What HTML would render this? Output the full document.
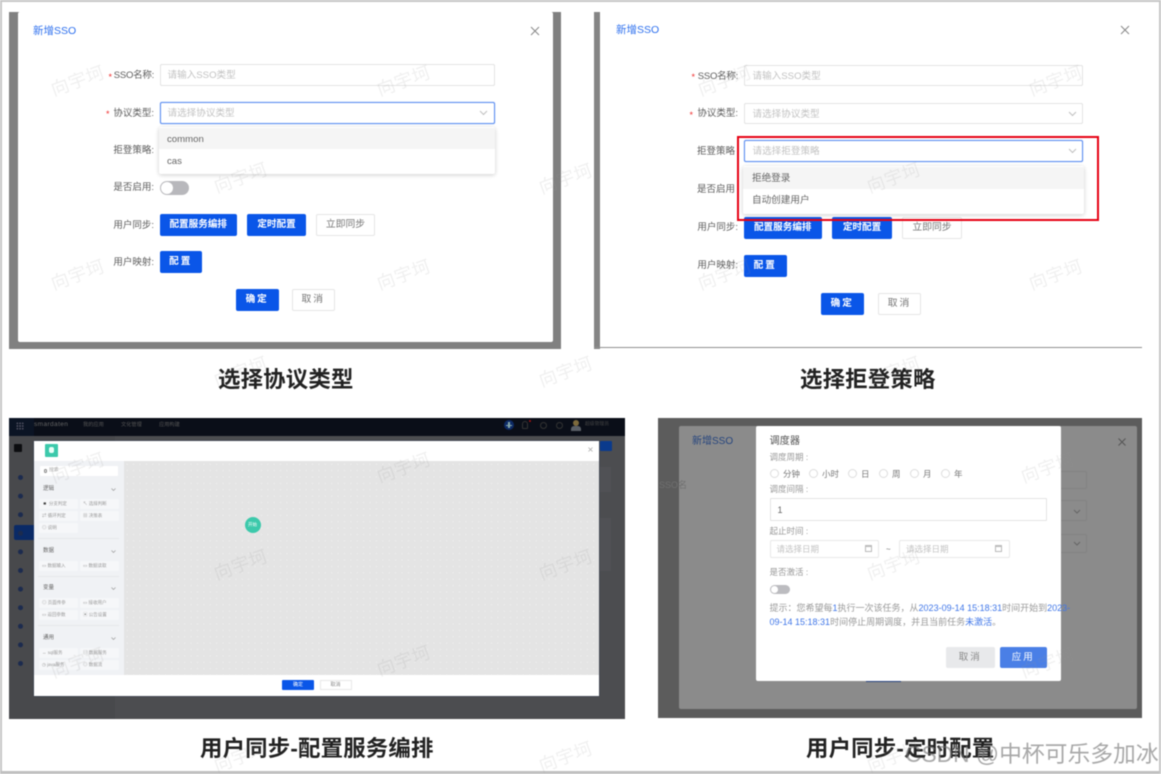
<!DOCTYPE html>
<html lang="zh-CN">
<head>
<meta charset="utf-8">
<title>SSO</title>
<style>
html,body{margin:0;padding:0;background:#fff}
#p{position:relative;width:1161px;height:774px;overflow:hidden;background:#fff;font-family:"Liberation Sans","Noto Sans CJK SC",sans-serif;filter:blur(.55px)}
#p div,#p span.a{position:absolute;box-sizing:border-box;white-space:nowrap}
.lb{font-size:9.5px;color:#5c5c5c;text-align:right;line-height:14px;height:14px;margin-top:1px}
.in{border:1px solid #e3e3e3;border-radius:2px;background:#fff;font-size:9.6px;color:#c2c2c2;padding-left:7px;line-height:21.5px}
.pr{background:#0a56e8;color:#fff;border-radius:2px;font-size:9.6px;text-align:center;line-height:21.5px;font-weight:bold}
.df{background:#fff;color:#777;border:1px solid #e5e5e5;border-radius:2px;font-size:9.8px;text-align:center;line-height:20px}
.cap{font-size:22.4px;font-weight:bold;color:#222;line-height:28px;height:28px;letter-spacing:.2px;margin-top:2px}
.wm{font-size:18px;color:rgba(150,150,150,.14);transform:rotate(-20deg);line-height:22px;letter-spacing:.5px;z-index:20}
.st{color:#f03030;font-size:9px;line-height:14px;height:14px}
.dd{background:#fff;box-shadow:0 1px 4px rgba(0,0,0,.2);border-radius:2px}
.it{font-size:9.6px;color:#666;padding-left:8px;line-height:23px}
.sb{background:#f6f7f9;font-size:4.5px;color:#999;line-height:10px;padding-left:3px;border-radius:1px}
.sh{font-size:5.5px;color:#666;line-height:8px}
.dv{background:#e6e7ea;height:1px}
.b{font-size:8.5px;color:#999;line-height:12px}
.t{font-size:8.5px;color:#888;line-height:12px}
.r{width:9px;height:9px;border:1px solid #ddd;border-radius:50%;background:#fff}
.bl{color:#3f76e8}
svg{position:absolute;overflow:visible}
</style>
</head>
<body>
<div id="p">
<!-- frame -->
<div style="left:0;top:0;width:1161px;height:2px;background:#c6c6c6"></div>
<div style="left:0;top:0;width:2px;height:774px;background:#c6c6c6"></div>
<div style="left:0;top:771px;width:1161px;height:3px;background:#c0c0c0"></div>
<div style="left:1159px;top:0;width:2px;height:774px;background:#c6c6c6"></div>

<!-- panel 1 -->
<div style="left:9px;top:11.5px;width:552px;height:337px;background:#808080"></div>
<div style="left:17.5px;top:12px;width:535.5px;height:330px;background:#fff;border-radius:2px"></div>
<div style="left:33px;top:23.5px;font-size:10.5px;color:#2c6fee;line-height:14px">新增SSO</div>
<svg style="left:530px;top:25.5px" width="10" height="10" viewBox="0 0 10 10"><path d="M1 1L9 9M9 1L1 9" stroke="#888" stroke-width="1" fill="none"/></svg>

<div class="st" style="left:108.5px;top:70px">*</div>
<div class="lb" style="left:100px;top:68px;width:54px;letter-spacing:-.25px">SSO名称:</div>
<div class="in" style="left:159.5px;top:64px;width:335px;height:22px">请输入SSO类型</div>
<div class="st" style="left:106px;top:107px">*</div>
<div class="lb" style="left:100px;top:105.5px;width:54px">协议类型:</div>
<div class="in" style="left:159.5px;top:101.5px;width:335px;height:22px;border-color:#5a8df0;box-shadow:0 0 1px #8fb2f5">请选择协议类型</div>
<svg style="left:479px;top:109.5px" width="9" height="6" viewBox="0 0 9 6"><path d="M1 1L4.5 4.5L8 1" stroke="#c0c0c0" fill="none"/></svg>
<div class="lb" style="left:100px;top:143px;width:54px">拒登策略:</div>
<div class="dd" style="left:159px;top:127px;width:336px;height:47px"></div>
<div class="it" style="left:159px;top:128px;width:336px;height:21px;background:#f5f5f5">common</div>
<div class="it" style="left:159px;top:150px;width:336px;height:21px">cas</div>
<div class="lb" style="left:100px;top:180px;width:54px">是否启用:</div>
<div style="left:159.5px;top:181px;width:29.5px;height:14px;border-radius:7px;background:#b8b8bc"></div>
<div style="left:161px;top:182px;width:12px;height:12px;border-radius:50%;background:#fff"></div>
<div class="lb" style="left:100px;top:217.5px;width:54px">用户同步:</div>
<div class="pr" style="left:159.5px;top:214px;width:77.5px;height:21.5px">配置服务编排</div>
<div class="pr" style="left:247px;top:214px;width:59px;height:21.5px">定时配置</div>
<div class="df" style="left:316px;top:214px;width:59px;height:21.5px">立即同步</div>
<div class="lb" style="left:100px;top:255px;width:54px">用户映射:</div>
<div class="pr" style="left:159.5px;top:251px;width:42.5px;height:22px;letter-spacing:2px">配置</div>
<div class="pr" style="left:235.7px;top:288.5px;width:43px;height:22px;letter-spacing:2px">确定</div>
<div class="df" style="left:292px;top:288.5px;width:42.5px;height:22px;letter-spacing:2px">取消</div>

<!-- panel 2 -->
<div style="left:593.5px;top:11.5px;width:6.5px;height:337px;background:#858585"></div>
<div style="left:593.5px;top:346.5px;width:548.5px;height:1.5px;background:#909090"></div>
<div style="left:616px;top:23px;font-size:10.5px;color:#2c6fee;line-height:14px">新增SSO</div>
<svg style="left:1120px;top:25px" width="10" height="10" viewBox="0 0 10 10"><path d="M1 1L9 9M9 1L1 9" stroke="#888" stroke-width="1" fill="none"/></svg>

<div class="st" style="left:691.5px;top:70px">*</div>
<div class="lb" style="left:684px;top:68.5px;width:54px;letter-spacing:-.25px">SSO名称:</div>
<div class="in" style="left:743.5px;top:64.5px;width:339.5px;height:21.5px;padding-left:8px">请输入SSO类型</div>
<div class="st" style="left:689.5px;top:108px">*</div>
<div class="lb" style="left:684px;top:106px;width:54px">协议类型:</div>
<div class="in" style="left:743.5px;top:102.5px;width:339.5px;height:21.5px;padding-left:8px">请选择协议类型</div>
<svg style="left:1068px;top:110.5px" width="9" height="6" viewBox="0 0 9 6"><path d="M1 1L4.5 4.5L8 1" stroke="#c0c0c0" fill="none"/></svg>
<div class="lb" style="left:684px;top:144px;width:51px">拒登策略</div>
<div class="in" style="left:743.5px;top:140px;width:339.5px;height:22px;border-color:#5a8df0;box-shadow:0 0 1px #8fb2f5;padding-left:8px">请选择拒登策略</div>
<svg style="left:1068px;top:148px" width="9" height="6" viewBox="0 0 9 6"><path d="M1 1L4.5 4.5L8 1" stroke="#c0c0c0" fill="none"/></svg>
<div class="lb" style="left:684px;top:182px;width:51px">是否启用</div>
<div class="lb" style="left:684px;top:220px;width:54px">用户同步:</div>
<div class="pr" style="left:743.5px;top:216.5px;width:78.5px;height:22px">配置服务编排</div>
<div class="pr" style="left:832px;top:216.5px;width:60px;height:22px">定时配置</div>
<div class="df" style="left:902px;top:216.5px;width:60px;height:22px">立即同步</div>
<div class="dd" style="left:743px;top:166px;width:340.5px;height:48px"></div>
<div class="it" style="left:743px;top:167px;width:340.5px;height:22px;background:#f5f5f5;padding-left:9px;line-height:23px">拒绝登录</div>
<div class="it" style="left:743px;top:189px;width:340.5px;height:22px;padding-left:9px">自动创建用户</div>
<div style="left:737px;top:136px;width:361.5px;height:85px;border:2px solid #e60012"></div>
<div class="lb" style="left:684px;top:258px;width:54px">用户映射:</div>
<div class="pr" style="left:743.5px;top:254.5px;width:43.5px;height:22px;letter-spacing:2px">配置</div>
<div class="pr" style="left:820.5px;top:292.5px;width:43.5px;height:22px;letter-spacing:2px">确定</div>
<div class="df" style="left:878px;top:292.5px;width:43px;height:22px;letter-spacing:2px">取消</div>

<!-- captions -->
<div class="cap" style="left:218px;top:364px">选择协议类型</div>
<div class="cap" style="left:800px;top:364px">选择拒登策略</div>
<div class="cap" style="left:200px;top:733px">用户同步-配置服务编排</div>
<div class="cap" style="left:806px;top:733px">用户同步-定时配置</div>

<!-- panel 3 -->
<div style="left:9px;top:417.5px;width:615.5px;height:301px;background:#4c4d50"></div>
<div style="left:9px;top:417.5px;width:106px;height:301px;background:#48494c"></div>
<div style="left:9px;top:417.5px;width:615.5px;height:18px;background:#0a0e18"></div>
<div style="left:9px;top:417.5px;width:25px;height:18px;background:#0b1424"></div>
<div style="left:15.5px;top:421.5px;width:8px;height:8px;background-image:radial-gradient(circle,#556 .7px,transparent .9px);background-size:2.7px 2.7px"></div>
<div style="left:34px;top:420px;font-size:6.5px;color:#666;line-height:10px;letter-spacing:.4px">smardaten</div>
<div style="left:83px;top:420px;font-size:5.2px;color:#555;line-height:10px">我的应用</div>
<div style="left:121px;top:420px;font-size:5.2px;color:#555;line-height:10px">文化管理</div>
<div style="left:159px;top:420px;font-size:5.2px;color:#555;line-height:10px">应用构建</div>
<div style="left:504px;top:420px;width:10px;height:10px;border-radius:50%;background:#0d2a66"></div>
<div style="left:506px;top:424.5px;width:6px;height:1.5px;background:#8aa"></div>
<div style="left:508.2px;top:422px;width:1.5px;height:6px;background:#8aa"></div>
<div style="left:522px;top:421px;width:6px;height:8px;border:1px solid #333;border-radius:3px 3px 1px 1px"></div>
<div style="left:529px;top:419.5px;width:2px;height:2px;border-radius:50%;background:#a11"></div>
<div style="left:540px;top:421.5px;width:7px;height:7px;border:1px solid #333;border-radius:50%"></div>
<div style="left:555.5px;top:421.5px;width:7px;height:7px;border:1px solid #333;border-radius:50%"></div>
<div style="left:573px;top:419.5px;width:6px;height:6px;border-radius:50%;background:#7d6a3c"></div>
<div style="left:571px;top:425.5px;width:10px;height:5px;border-radius:3px 3px 0 0;background:#5a5f66"></div>
<div style="left:585px;top:421px;font-size:4.8px;color:#444;line-height:8px">超级管理员</div>
<div style="left:14px;top:444px;width:8px;height:8px;background:#0c0d10;border-radius:1px"></div>
<div style="left:14px;top:525px;width:22px;height:15px;background:#0a2a66;border-radius:2px"></div>
<div style="left:18px;top:474.5px;width:5px;height:5px;border-radius:50%;background:#1c2b4e;box-shadow:0 18.6px 0 #1c2b4e,0 37.2px 0 #1c2b4e,0 55.8px 0 #1c2b4e,0 74.4px 0 #1c2b4e,0 93px 0 #1c2b4e,0 111.6px 0 #1c2b4e,0 130.2px 0 #1c2b4e,0 148.8px 0 #1c2b4e,0 167.4px 0 #1c2b4e,0 186px 0 #1c2b4e"></div>
<div style="left:600px;top:441px;width:11.5px;height:9.5px;background:#0a3a8c;border-radius:1px"></div>
<div style="left:600px;top:467px;width:11px;height:25px;background:#505155"></div>
<div style="left:600px;top:518px;width:11px;height:53px;background:#505155"></div>

<div style="left:34px;top:440.5px;width:565px;height:255px;background:#fff;box-shadow:0 0 1px #33456e"></div>
<div style="left:45px;top:444px;width:13px;height:12.5px;background:#3cc9ab;border-radius:1px"></div>
<div style="left:49px;top:447px;width:5px;height:6px;background:#e8fff8;border-radius:2px"></div>
<svg style="left:587.5px;top:446.5px" width="5" height="5" viewBox="0 0 5 5"><path d="M.5 .5L4.5 4.5M4.5 .5L.5 4.5" stroke="#aaa" stroke-width=".8" fill="none"/></svg>
<div style="left:34px;top:461px;width:90px;height:214px;background:#f0f2f5"></div>
<div style="left:124px;top:461px;width:475px;height:214px;background-color:#e4e4e4;background-image:radial-gradient(circle,#eeeeee .5px,transparent .8px);background-size:6.4px 6.4px"></div>
<div style="left:244.5px;top:517px;width:16px;height:16px;border-radius:50%;background:#3cc9ab;color:#fff;font-size:4.5px;text-align:center;line-height:16px">开始</div>
<div style="left:282px;top:680px;width:32px;height:10px;background:#0a56e8;border-radius:1px;color:#fff;font-size:5px;text-align:center;line-height:10px">确定</div>
<div style="left:319.5px;top:680px;width:32px;height:10px;background:#fff;border:1px solid #e8e8e8;color:#888;font-size:5px;text-align:center;line-height:8px">取消</div>

<div style="left:40px;top:466px;width:78px;height:10px;background:#fff;font-size:4.8px;color:#aaa;line-height:10px;padding-left:9px;border-radius:1px">搜索</div>
<div style="left:43.5px;top:469px;width:3.5px;height:3.5px;border:.7px solid #888;border-radius:50%"></div>

<div class="sh" style="left:43px;top:485px">逻辑</div>
<svg style="left:111px;top:488px" width="5" height="3" viewBox="0 0 5 3"><path d="M.5 .5L2.5 2.5L4.5 .5" stroke="#999" stroke-width=".7" fill="none"/></svg>
<div class="sb" style="left:39px;top:499px;width:38.5px;height:10px">◾ 分支判定</div>
<div class="sb" style="left:80px;top:499px;width:38.5px;height:10px">↖ 选择判断</div>
<div class="sb" style="left:39px;top:511px;width:38.5px;height:10px">⇄ 循环判定</div>
<div class="sb" style="left:80px;top:511px;width:38.5px;height:10px">▦ 决策表</div>
<div class="sb" style="left:39px;top:523px;width:38.5px;height:10px">◎ 说明</div>
<div class="dv" style="left:38px;top:538px;width:81px"></div>

<div class="sh" style="left:43px;top:547px">数据</div>
<svg style="left:111px;top:550px" width="5" height="3" viewBox="0 0 5 3"><path d="M.5 .5L2.5 2.5L4.5 .5" stroke="#999" stroke-width=".7" fill="none"/></svg>
<div class="sb" style="left:39px;top:561px;width:38.5px;height:10px">▭ 数据输入</div>
<div class="sb" style="left:80px;top:561px;width:38.5px;height:10px">▭ 数据读取</div>
<div class="dv" style="left:38px;top:575.5px;width:81px"></div>

<div class="sh" style="left:43px;top:584px">变量</div>
<svg style="left:111px;top:587px" width="5" height="3" viewBox="0 0 5 3"><path d="M.5 .5L2.5 2.5L4.5 .5" stroke="#999" stroke-width=".7" fill="none"/></svg>
<div class="sb" style="left:39px;top:598px;width:38.5px;height:10px">◎ 页面传参</div>
<div class="sb" style="left:80px;top:598px;width:38.5px;height:10px">▭ 接收用户</div>
<div class="sb" style="left:39px;top:610px;width:38.5px;height:10px">▭ 返回参数</div>
<div class="sb" style="left:80px;top:610px;width:38.5px;height:10px">▣ 公告设置</div>
<div class="dv" style="left:38px;top:625px;width:81px"></div>

<div class="sh" style="left:43px;top:634px">通用</div>
<svg style="left:111px;top:637px" width="5" height="3" viewBox="0 0 5 3"><path d="M.5 .5L2.5 2.5L4.5 .5" stroke="#999" stroke-width=".7" fill="none"/></svg>
<div class="sb" style="left:39px;top:648px;width:38.5px;height:10px">↔ sql服务</div>
<div class="sb" style="left:80px;top:648px;width:38.5px;height:10px">▤ 数据服务</div>
<div class="sb" style="left:39px;top:660px;width:38.5px;height:10px">◷ java服务</div>
<div class="sb" style="left:80px;top:660px;width:38.5px;height:10px">◎ 数据流</div>

<!-- panel 4 -->
<div style="left:658px;top:417.5px;width:484px;height:300.5px;background:#5c5c5c"></div>
<div style="left:678.5px;top:426px;width:458.5px;height:282.5px;background:#8b8b8b;border-radius:2px"></div>
<div style="left:692px;top:435px;font-size:10px;color:#26457e;line-height:14px">新增SSO</div>
<svg style="left:1117.5px;top:437.5px" width="8" height="8" viewBox="0 0 8 8"><path d="M.5 .5L7.5 7.5M7.5 .5L.5 7.5" stroke="#555" stroke-width="1" fill="none"/></svg>
<div style="top:478px;font-size:9px;color:#707070;line-height:14px;left:659px">SSO名</div>
<div style="left:1050px;top:471px;width:37px;height:18px;border:1px solid #828282;border-radius:2px"></div>
<div style="left:1050px;top:500px;width:37px;height:21px;border:1px solid #828282;border-radius:2px"></div>
<div style="left:1050px;top:534px;width:37px;height:19px;border:1px solid #828282;border-radius:2px"></div>
<svg style="left:1073px;top:509px" width="8" height="5" viewBox="0 0 8 5"><path d="M1 1L4 4L7 1" stroke="#666" fill="none"/></svg>
<svg style="left:1073px;top:541px" width="8" height="5" viewBox="0 0 8 5"><path d="M1 1L4 4L7 1" stroke="#666" fill="none"/></svg>
<div style="left:866px;top:678px;width:35px;height:4px;background:#24407c"></div>

<div style="left:756px;top:426px;width:304.5px;height:254.5px;background:#fff;border-radius:2px"></div>
<div style="left:769.5px;top:435px;font-size:10.2px;color:#555;line-height:14px">调度器</div>
<div class="b" style="left:769.5px;top:451px">调度周期 :</div>
<div class="r" style="left:769.5px;top:469px"></div><div class="b" style="left:783px;top:467.5px;color:#777">分钟</div>
<div class="r" style="left:808.5px;top:469px"></div><div class="b" style="left:822px;top:467.5px;color:#777">小时</div>
<div class="r" style="left:847.5px;top:469px"></div><div class="b" style="left:861px;top:467.5px;color:#777">日</div>
<div class="r" style="left:878.5px;top:469px"></div><div class="b" style="left:892px;top:467.5px;color:#777">周</div>
<div class="r" style="left:909.5px;top:469px"></div><div class="b" style="left:923px;top:467.5px;color:#777">月</div>
<div class="r" style="left:940.5px;top:469px"></div><div class="b" style="left:954px;top:467.5px;color:#777">年</div>
<div class="b" style="left:769.5px;top:483px">调度间隔 :</div>
<div style="left:769.5px;top:498px;width:277.5px;height:23px;border:1px solid #e3e3e3;border-radius:1px;font-size:9px;color:#666;line-height:22px;padding-left:7px">1</div>
<div class="b" style="left:769.5px;top:525px">起止时间 :</div>
<div style="left:769.5px;top:539.5px;width:109.5px;height:18px;border:1px solid #e8e8e8;border-radius:2px;font-size:8.5px;color:#c4c4c4;line-height:16px;padding-left:6px">请选择日期</div>
<div style="left:864.5px;top:545px;width:7px;height:7px;border:1px solid #bbb;border-top-width:2px"></div>
<div style="left:886px;top:544px;font-size:8px;color:#777;line-height:12px">~</div>
<div style="left:899px;top:539.5px;width:110.5px;height:18px;border:1px solid #e8e8e8;border-radius:2px;font-size:8.5px;color:#c4c4c4;line-height:16px;padding-left:6px">请选择日期</div>
<div style="left:995px;top:545px;width:7px;height:7px;border:1px solid #bbb;border-top-width:2px"></div>
<div class="b" style="left:769.5px;top:566px">是否激活 :</div>
<div style="left:769.5px;top:585px;width:20.5px;height:9px;border-radius:5px;background:#bcbcc0"></div>
<div style="left:770.5px;top:586px;width:7px;height:7px;border-radius:50%;background:#fff"></div>
<div style="left:769.5px;top:602px;font-size:9px;color:#999;line-height:12px">提示：您希望每<span class="bl">1</span>执行一次该任务，从<span class="bl">2023-09-14 15:18:31</span>时间开始到<span class="bl">2023-</span></div>
<div style="left:769.5px;top:616px;font-size:9px;color:#999;line-height:12px"><span class="bl">09-14 15:18:31</span>时间停止周期调度，并且当前任务<span class="bl">未激活</span>。</div>
<div style="left:945.5px;top:647px;width:49.5px;height:21px;background:#e8e9eb;border-radius:2px;font-size:9.5px;color:#888;text-align:center;line-height:21px;letter-spacing:2px">取消</div>
<div style="left:999.5px;top:647px;width:47.5px;height:21px;background:#4a7fe6;border-radius:2px;font-size:9.5px;color:#fff;text-align:center;line-height:21px;letter-spacing:2px">应用</div>

<!-- watermarks -->
<div class="wm" style="left:50px;top:70px">向宇坷</div>
<div class="wm" style="left:376px;top:70px">向宇坷</div>
<div class="wm" style="left:213px;top:167px">向宇坷</div>
<div class="wm" style="left:538px;top:168px">向宇坷</div>
<div class="wm" style="left:50px;top:264px">向宇坷</div>
<div class="wm" style="left:376px;top:264px">向宇坷</div>
<div class="wm" style="left:213px;top:361px">向宇坷</div>
<div class="wm" style="left:538px;top:361px">向宇坷</div>
<div class="wm" style="left:697px;top:70px">向宇坷</div>
<div class="wm" style="left:1028px;top:70px">向宇坷</div>
<div class="wm" style="left:866px;top:167px">向宇坷</div>
<div class="wm" style="left:697px;top:264px">向宇坷</div>
<div class="wm" style="left:1028px;top:264px">向宇坷</div>
<div class="wm" style="left:866px;top:361px">向宇坷</div>
<div class="wm" style="left:50px;top:457px">向宇坷</div>
<div class="wm" style="left:213px;top:554px">向宇坷</div>
<div class="wm" style="left:50px;top:652px">向宇坷</div>
<div class="wm" style="left:213px;top:746px">向宇坷</div>
<div class="wm" style="left:376px;top:457px">向宇坷</div>
<div class="wm" style="left:538px;top:554px">向宇坷</div>
<div class="wm" style="left:376px;top:650px">向宇坷</div>
<div class="wm" style="left:538px;top:746px">向宇坷</div>
<div class="wm" style="left:1020px;top:457px">向宇坷</div>
<div class="wm" style="left:866px;top:554px">向宇坷</div>
<div class="wm" style="left:1020px;top:652px">向宇坷</div>
<div class="wm" style="left:866px;top:746px">向宇坷</div>

<!-- CSDN -->
<div style="left:905px;top:739px;width:252px;text-align:right;font-size:22.8px;line-height:30px;color:rgba(110,110,110,.6);z-index:30">CSDN @中杯可乐多加冰</div>
</div>
</body>
</html>
